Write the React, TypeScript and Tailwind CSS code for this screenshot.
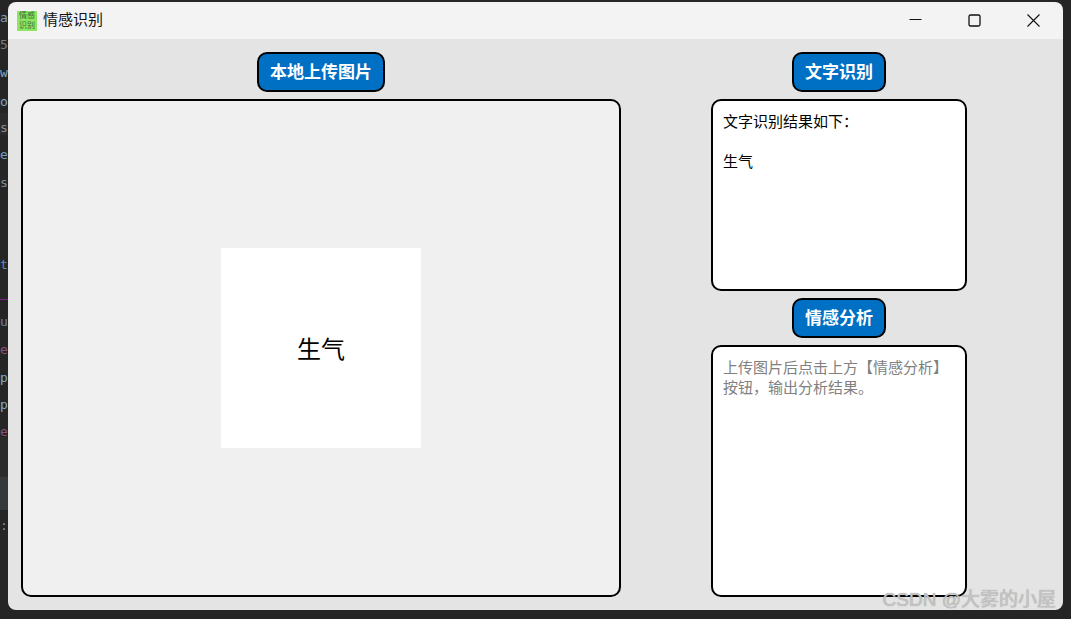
import React from 'react'

const CJK = "font-['Liberation_Sans','Noto_Sans_CJK_SC',sans-serif]"

// slivers of the code editor that shows behind the window
const editorRows = [
  { text: 'a', className: 'h-[27px] text-[#7f9db8]' },
  { text: '5', className: 'h-[28px] text-[#77797c]' },
  { text: 'w', className: 'h-[29px] text-[#7fa8c8]' },
  { text: 'o', className: 'h-[20px] text-[#7fa8c8]' },
  { text: 's', className: 'mb-[11px] h-[22px] bg-[#2b2b2c] pt-[6px] text-[#8a8f94]' },
  { text: 'e', className: 'h-[28px] text-[#6f9cc0]' },
  { text: 's', className: 'h-[82px] text-[#7f8f9c]' },
  { text: 't', className: 'h-[43px] text-[#5a8fc4]' },
  { text: 'u', className: 'mt-[13px] h-[28px] text-[#6a7fb0]' },
  { text: 'e', className: 'h-[28px] text-[#8a4f78]' },
  { text: 'p', className: 'h-[27px] text-[#7fa8c8]' },
  { text: 'p', className: 'h-[27px] text-[#7fa8c8]' },
  { text: 'e', className: 'h-[14px] text-[#8a4f78]' },
]

function BlueButton({ label, width }: { label: string; width: string }) {
  return (
    <button
      type="button"
      className={`${width} h-10 shrink-0 rounded-[10px] border-2 border-black bg-[#0070c4] pt-px text-[17px] font-bold text-white`}
    >
      {label}
    </button>
  )
}

function WindowButtons() {
  return (
    <div className="flex items-center">
      <div className="flex h-[37px] w-[59px] items-center justify-center">
        <svg width="13" height="13" viewBox="0 0 13 13">
          <path d="M0.5 5.5H12.5" stroke="#111" strokeWidth="1" />
        </svg>
      </div>
      <div className="flex h-[37px] w-[59px] items-center justify-center">
        <svg width="13" height="13" viewBox="0 0 13 13" fill="none">
          <rect x="1" y="1" width="11" height="11" rx="1.5" stroke="#111" strokeWidth="1.3" />
        </svg>
      </div>
      <div className="flex h-[37px] w-[59px] items-center justify-center">
        <svg width="13" height="13" viewBox="0 0 13 13">
          <path d="M0.5 0.5L12.5 12.5M12.5 0.5L0.5 12.5" stroke="#111" strokeWidth="1.1" />
        </svg>
      </div>
    </div>
  )
}

export default function App() {
  return (
    <div className={`${CJK} relative flex h-[619px] w-[1071px] overflow-hidden bg-[#252526]`}>
      <div className="flex w-2 shrink-0 flex-col overflow-hidden pt-[9px] font-['DejaVu_Sans_Mono',monospace] text-[13px] leading-[18px]">
        {editorRows.slice(0, 8).map((row, i) => (
          <div key={i} className={row.className}>
            {row.text}
          </div>
        ))}
        <div className="h-px shrink-0 bg-[#7a1f8a]" />
        {editorRows.slice(8).map((row, i) => (
          <div key={i} className={row.className}>
            {row.text}
          </div>
        ))}
        <div className="h-10 shrink-0 bg-[#2a2a2b]" />
        <div className="h-[33px] shrink-0 bg-[#34383a]" />
        <div className="mt-[7px] text-[#8a8f94]">:</div>
      </div>

      <div className="mt-[2px] flex h-[608px] w-[1055px] shrink-0 flex-col overflow-hidden rounded-lg">
        <div className="flex h-[37px] shrink-0 items-center justify-between bg-[#f3f3f3]">
          <div className="flex items-center pl-[9px]">
            <div className="flex h-5 w-5 flex-col items-center justify-between overflow-hidden bg-[#8ce65f] text-[8px] leading-[10px] text-[#3f6b35]">
              <span>情感</span>
              <span>识别</span>
            </div>
            <span className="ml-[6px] text-[15px] text-[#111]">情感识别</span>
          </div>
          <WindowButtons />
        </div>

        <div className="flex flex-1 gap-[90px] bg-[#e4e4e4] pl-[13px] pt-[13px]">
          <div className="flex w-[600px] flex-col items-center gap-[7px]">
            <BlueButton label="本地上传图片" width="w-[128px]" />
            <div className="flex h-[498px] w-full items-center justify-center rounded-[10px] border-2 border-black bg-[#f0f0f0]">
              <div className="flex h-[200px] w-[200px] items-center justify-center bg-white pt-[3px] text-[24px] text-black">
                生气
              </div>
            </div>
          </div>

          <div className="flex w-[256px] flex-col items-center">
            <BlueButton label="文字识别" width="w-[94px]" />
            <div className="mt-[7px] h-[192px] w-full rounded-[10px] border-2 border-black bg-white px-[10px] pb-[10px] pt-[11px] text-[15px] leading-[20px] text-black">
              <p>文字识别结果如下：</p>
              <p className="mt-[20px]">生气</p>
            </div>
            <div className="mt-[7px]">
              <BlueButton label="情感分析" width="w-[94px]" />
            </div>
            <div className="mt-[7px] h-[252px] w-full rounded-[10px] border-2 border-black bg-white px-[10px] pb-[10px] pt-[11px] text-[15px] leading-[20px] text-[#808080]">
              上传图片后点击上方【情感分析】按钮，输出分析结果。
            </div>
          </div>
        </div>
      </div>

      {/* CSDN watermark laid over the screenshot */}
      <span className="absolute bottom-[7px] right-[15px] text-[19px] leading-[24px] text-[#c4c4c4] [text-shadow:0_0_1px_#999]">
        CSDN @大雾的小屋
      </span>
    </div>
  )
}
